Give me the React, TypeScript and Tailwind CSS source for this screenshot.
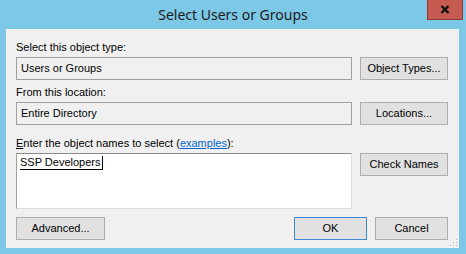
const Button = ({ label, w, focused }: { label: string; w: string; focused?: boolean }) => (
  <button
    type="button"
    className={`${w} h-[23px] shrink-0 bg-[#e1e1e1] border ${focused ? "border-[#3c8ad6]" : "border-[#adadad]"} text-[11px] leading-[21px] text-black text-center`}
  >
    {label}
  </button>
);

const ReadonlyBox = ({ value }: { value: string }) => (
  <div className="w-[336px] h-[23px] shrink-0 bg-[#f0f0f0] border border-[#a0a0a0] pl-[4px] text-[11px] leading-[21px] text-black">
    {value}
  </div>
);

const App = () => {
  return (
    <div
      className="w-[466px] h-[254px] bg-[#7dc8e7] flex flex-col overflow-hidden"
      style={{ fontFamily: '"Liberation Sans", Arial, sans-serif' }}
    >
      {/* Title bar */}
      <div className="relative h-[29px] shrink-0 flex items-center justify-center">
        <span
          className="text-[14px] text-[#1b1b1b] leading-none mt-[1px]"
          style={{ fontFamily: '"Noto Sans", "Open Sans", sans-serif' }}
        >
          Select Users or Groups
        </span>
        <div className="absolute left-[427px] top-0 w-[36px] h-[20px] bg-[#c65b52] border border-t-0 border-[#8f3a33] flex items-center justify-center">
          <svg width="10" height="9" viewBox="0 0 10 9">
            <path d="M1.5 1 L8.5 8 M8.5 1 L1.5 8" stroke="#111" strokeWidth="2.4" />
          </svg>
        </div>
      </div>

      {/* Client area */}
      <div className="relative ml-[6px] w-[453px] h-[219px] bg-[#f0f0f0] flex flex-col pl-[10px] pt-[11px]">
        <div className="h-[14px] text-[11px] leading-[14px] text-black">Select this object type:</div>
        <div className="flex gap-[8px] mt-[3px]">
          <ReadonlyBox value="Users or Groups" />
          <Button label="Object Types..." w="w-[88px]" />
        </div>

        <div className="h-[14px] mt-[5px] text-[11px] leading-[14px] text-black">From this location:</div>
        <div className="flex gap-[8px] mt-[3px]">
          <ReadonlyBox value="Entire Directory" />
          <Button label="Locations..." w="w-[88px]" />
        </div>

        <div className="h-[14px] mt-[11px] text-[11px] leading-[14px] text-black">
          <span className="underline">E</span>nter the object names to select (
          <span className="text-[#0066cc] underline">examples</span>):
        </div>
        <div className="flex gap-[8px] mt-[3px] items-start">
          <div className="w-[336px] h-[56px] shrink-0 bg-white border border-[#dcdcdc] border-t-[#8a8a8a] border-l-[#a0a0a0] pl-[3px] pt-[2px] flex items-start">
            <span className="h-[14px] text-[11px] leading-[13px] text-black border-b border-r border-black pr-[1px]">
              SSP Developers
            </span>
          </div>
          <Button label="Check Names" w="w-[88px]" />
        </div>

        <div className="flex mt-[8px]">
          <Button label="Advanced..." w="w-[89px]" />
          <div className="flex gap-[8px] ml-[189px]">
            <Button label="OK" w="w-[73px]" focused />
            <Button label="Cancel" w="w-[73px]" />
          </div>
        </div>

        <svg className="absolute right-[1px] bottom-[1px]" width="8" height="8" viewBox="0 0 8 8">
          <rect x="6" y="0" width="1" height="1" fill="#b8b8b8" />
          <rect x="3" y="3" width="1" height="1" fill="#b8b8b8" />
          <rect x="6" y="3" width="1" height="1" fill="#b8b8b8" />
          <rect x="0" y="6" width="1" height="1" fill="#b8b8b8" />
          <rect x="3" y="6" width="1" height="1" fill="#b8b8b8" />
          <rect x="6" y="6" width="1" height="1" fill="#b8b8b8" />
        </svg>
      </div>
    </div>
  );
};

export default App;
